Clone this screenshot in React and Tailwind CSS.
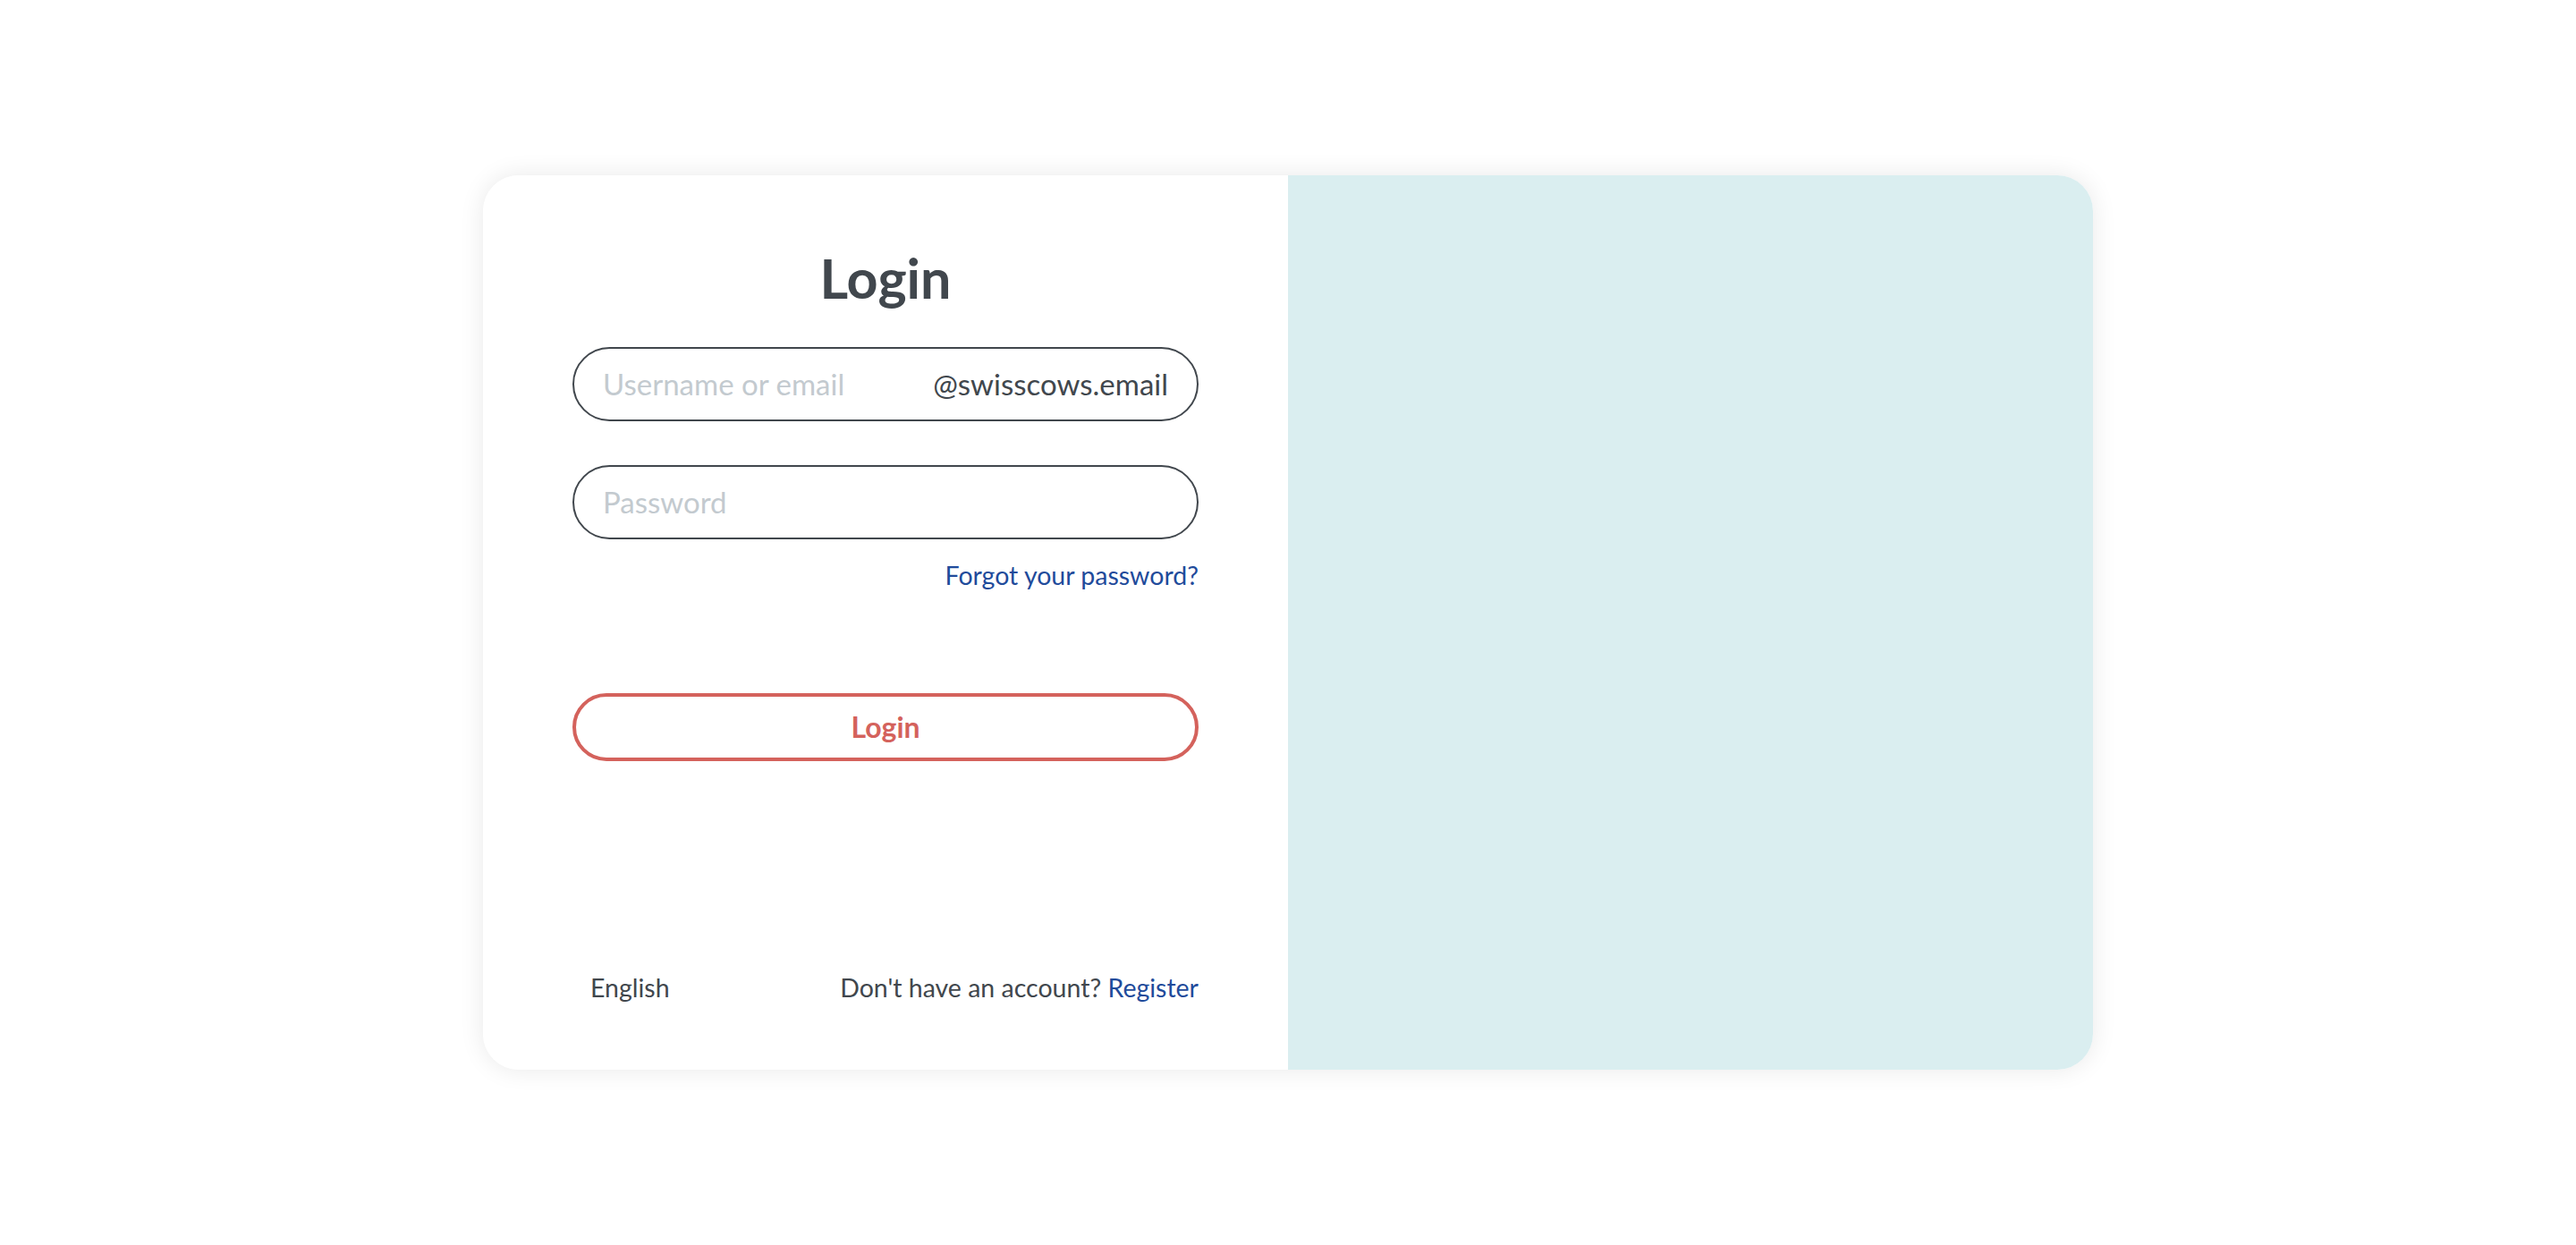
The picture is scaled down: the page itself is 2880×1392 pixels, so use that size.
import React, { useState } from "react";

const App = () => {
    const [user, setUser] = useState({ username: "", password: "" });

    const handleChange = (fieldName, value) => {
        setUser((prev) => ({ ...prev, [fieldName]: value }));
    };

    return (
        <div className="flex items-center justify-center h-[1392px] bg-white font-['Lato',sans-serif]">
            <div className="flex w-[1800px] h-[1000px] rounded-[40px] overflow-hidden shadow-[0_0_28px_rgba(0,0,0,0.09)]">
                {/* Form side */}
                <div className="flex flex-col w-1/2 h-full px-[100px] pt-[79px] pb-[75px] bg-white">
                    <h1 className="text-center text-[61px] leading-[72px] font-bold text-[#41474d]">Login</h1>

                    <form className="flex flex-col mt-[41px]" onSubmit={(e) => e.preventDefault()}>
                        <div className="flex items-center h-[83px] px-[32px] border-2 border-[#41474d] rounded-full">
                            <input
                                type="text"
                                value={user.username}
                                placeholder="Username or email"
                                onChange={(e) => handleChange("username", e.target.value)}
                                className="flex-1 min-w-0 text-[33px] text-[#41474d] placeholder:text-[#c3cacf] bg-transparent outline-none"
                            />
                            <span className="text-[33px] text-[#41474d]">@swisscows.email</span>
                        </div>

                        <div className="flex items-center h-[83px] px-[32px] mt-[49px] border-2 border-[#41474d] rounded-full">
                            <input
                                type="password"
                                value={user.password}
                                placeholder="Password"
                                onChange={(e) => handleChange("password", e.target.value)}
                                className="flex-1 min-w-0 text-[33px] text-[#41474d] placeholder:text-[#c3cacf] bg-transparent outline-none"
                            />
                        </div>

                        <div className="flex justify-end mt-[23px]">
                            <a href="#" className="text-[28.5px] leading-[34px] text-[#1f4b9b]">Forgot your password?</a>
                        </div>

                        <button
                            type="submit"
                            className="h-[76px] mt-[115px] border-4 border-[#d4625c] rounded-full text-[32px] font-bold text-[#d4625c]"
                        >
                            Login
                        </button>
                    </form>

                    {/* Footer */}
                    <div className="flex items-center justify-between mt-auto text-[28.5px] leading-[34px] text-[#41474d]">
                        <button type="button" className="px-[20px]">English</button>
                        <p>
                            Don't have an account? <a href="#" className="text-[#1f4b9b]">Register</a>
                        </p>
                    </div>
                </div>

                {/* Illustration side */}
                <div className="w-1/2 h-full bg-[#daeef0]"></div>
            </div>
        </div>
    );
};

export default App;
